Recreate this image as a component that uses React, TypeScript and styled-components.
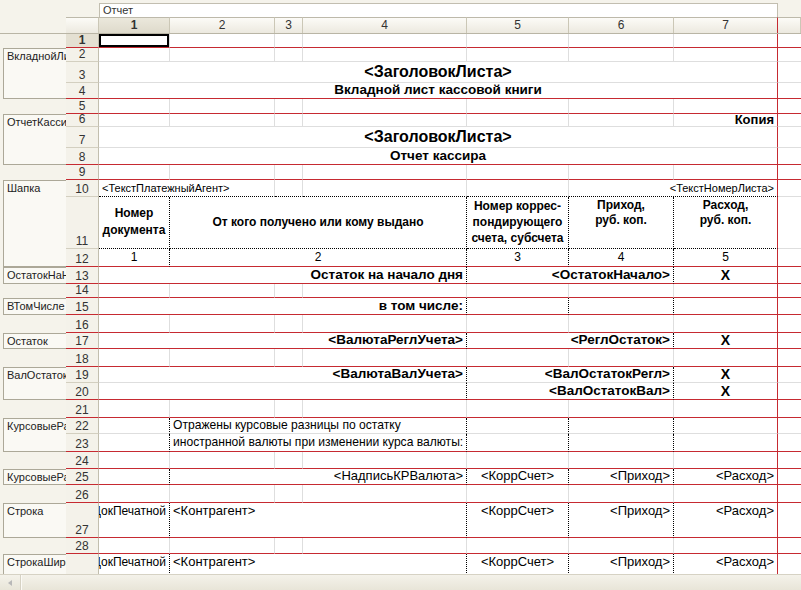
import React from "react";
import styled, { createGlobalStyle, css } from "styled-components";

const RED = "#c62a31";
const GRID = "#dedede";
const TAN = "#cbc7b6";
const BEIGE = "#f5f3eb";
const COLS = [71, 105, 28, 164, 102, 105, 104];
const ROW_COLS = `33px ${COLS.map((w) => w + "px").join(" ")} 1fr`;

type Align = "left" | "center" | "right";

type CellDef = {
  c: number;
  s?: number;
  t?: string;
  al?: Align;
  top?: boolean;
  b?: boolean;
  fs?: number;
  lh?: number;
};

type RowDef = {
  n: number;
  h: number;
  red?: boolean;
  db?: boolean;
  dv?: number[];
  cells?: CellDef[];
};

type Area = { name: string; from: number; to: number };

const GlobalStyle = createGlobalStyle`
  html, body {
    margin: 0;
    padding: 0;
    background: ${BEIGE};
  }
  body {
    font-family: "Liberation Sans", Arial, sans-serif;
    color: #000;
    overflow: hidden;
  }
`;

// шрифты макета: заголовки, жирные итоги, обычные поля
const big = (t: string): CellDef => ({ c: 1, s: 7, t, al: "center", b: true, fs: 16 });
const sub = (t: string): CellDef => ({ c: 1, s: 7, t, al: "center", b: true, fs: 13.5 });
const bold = (c: number, s: number, t: string): CellDef => ({ c, s, t, al: "right", b: true, fs: 13.5 });
const X: CellDef = { c: 7, t: "X", al: "center", b: true, fs: 14 };

const lineCells = (top: boolean): CellDef[] => [
  { c: 1, t: "ДокПечатной", al: "right", top, fs: 12 },
  { c: 2, s: 3, t: "<Контрагент>", al: "left", top, fs: 13 },
  { c: 5, t: "<КоррСчет>", al: "center", top, fs: 13 },
  { c: 6, t: "<Приход>", al: "right", top, fs: 13 },
  { c: 7, t: "<Расход>", al: "right", top, fs: 13 },
];

const ROWS: RowDef[] = [
  { n: 1, h: 14, red: true },
  { n: 2, h: 14 },
  { n: 3, h: 21, cells: [big("<ЗаголовокЛиста>")] },
  { n: 4, h: 16, red: true, cells: [sub("Вкладной лист кассовой книги")] },
  { n: 5, h: 15, red: true },
  { n: 6, h: 13, cells: [{ c: 7, t: "Копия", al: "right", b: true, fs: 13 }] },
  { n: 7, h: 21, cells: [big("<ЗаголовокЛиста>")] },
  { n: 8, h: 17, red: true, cells: [sub("Отчет кассира")] },
  { n: 9, h: 15, red: true },
  {
    n: 10,
    h: 17,
    db: true,
    cells: [
      { c: 1, s: 2, t: "<ТекстПлатежныйАгент>", al: "left", fs: 11 },
      { c: 6, s: 2, t: "<ТекстНомерЛиста>", al: "right", fs: 11 },
    ],
  },
  {
    n: 11,
    h: 52,
    db: true,
    dv: [1, 4, 5, 6],
    cells: [
      { c: 1, t: "Номер\nдокумента", al: "center", b: true, fs: 12, lh: 17 },
      { c: 2, s: 3, t: "От кого получено или кому выдано", al: "center", b: true, fs: 12 },
      { c: 5, t: "Номер коррес-\nпондирующего\nсчета, субсчета", al: "center", b: true, fs: 12, lh: 16 },
      { c: 6, t: "Приход,\nруб. коп.", al: "center", top: true, b: true, fs: 12, lh: 15 },
      { c: 7, t: "Расход,\nруб. коп.", al: "center", top: true, b: true, fs: 12, lh: 15 },
    ],
  },
  {
    n: 12,
    h: 18,
    red: true,
    dv: [1, 4, 5, 6],
    cells: [
      { c: 1, t: "1", al: "center", fs: 12 },
      { c: 2, s: 3, t: "2", al: "center", fs: 12 },
      { c: 5, t: "3", al: "center", fs: 12 },
      { c: 6, t: "4", al: "center", fs: 12 },
      { c: 7, t: "5", al: "center", fs: 12 },
    ],
  },
  {
    n: 13,
    h: 17,
    red: true,
    dv: [4, 6],
    cells: [bold(1, 4, "Остаток на начало дня"), bold(5, 2, "<ОстатокНачало>"), X],
  },
  { n: 14, h: 14, red: true },
  { n: 15, h: 17, red: true, dv: [4, 5, 6], cells: [bold(1, 4, "в том числе:")] },
  { n: 16, h: 18, red: true },
  {
    n: 17,
    h: 16,
    red: true,
    dv: [4, 6],
    cells: [bold(1, 4, "<ВалютаРеглУчета>"), bold(5, 2, "<РеглОстаток>"), X],
  },
  { n: 18, h: 18, red: true },
  {
    n: 19,
    h: 16,
    dv: [4, 6],
    cells: [bold(1, 4, "<ВалютаВалУчета>"), bold(5, 2, "<ВалОстатокРегл>"), X],
  },
  {
    n: 20,
    h: 17,
    red: true,
    dv: [4, 6],
    cells: [{ c: 1, s: 4 }, bold(5, 2, "<ВалОстатокВал>"), X],
  },
  { n: 21, h: 18, red: true },
  {
    n: 22,
    h: 16,
    dv: [1, 4, 5, 6],
    cells: [{ c: 2, s: 3, t: "Отражены курсовые разницы по остатку", al: "left", fs: 12.1 }],
  },
  {
    n: 23,
    h: 18,
    red: true,
    dv: [1, 4, 5, 6],
    cells: [{ c: 2, s: 3, t: "иностранной валюты при изменении курса валюты:", al: "left", fs: 12.1 }],
  },
  { n: 24, h: 17, red: true },
  {
    n: 25,
    h: 16,
    red: true,
    dv: [1, 4, 5, 6],
    cells: [
      { c: 2, s: 3, t: "<НадписьКРВалюта>", al: "right", fs: 13 },
      { c: 5, t: "<КоррСчет>", al: "center", fs: 13 },
      { c: 6, t: "<Приход>", al: "right", fs: 13 },
      { c: 7, t: "<Расход>", al: "right", fs: 13 },
    ],
  },
  { n: 26, h: 18, red: true },
  { n: 27, h: 35, red: true, dv: [1, 4, 5, 6], cells: lineCells(true) },
  { n: 28, h: 16, red: true },
  { n: 29, h: 35, dv: [1, 4, 5, 6], cells: lineCells(true) },
];

const AREAS: Area[] = [
  { name: "ВкладнойЛист", from: 2, to: 4 },
  { name: "ОтчетКассира", from: 6, to: 8 },
  { name: "Шапка", from: 10, to: 12 },
  { name: "ОстатокНаНачало", from: 13, to: 13 },
  { name: "ВТомЧисле", from: 15, to: 15 },
  { name: "Остаток", from: 17, to: 17 },
  { name: "ВалОстаток", from: 19, to: 20 },
  { name: "КурсовыеРазницы", from: 22, to: 23 },
  { name: "КурсовыеРазницыИтог", from: 25, to: 25 },
  { name: "Строка", from: 27, to: 27 },
  { name: "СтрокаШирокая", from: 29, to: 29 },
];

const Page = styled.div`
  width: 801px;
  height: 590px;
  display: flex;
  flex-direction: column;
  background: ${BEIGE};
  overflow: hidden;
`;

const TopBar = styled.div`
  height: 17px;
  padding: 3px 0 0 99px;
  box-sizing: border-box;
  display: flex;
`;

const ReportTab = styled.div`
  width: 679px;
  background: #fff;
  border: 1px solid #c2beb0;
  border-bottom: none;
  box-sizing: border-box;
  font-size: 11px;
  line-height: 13px;
  color: #333;
  padding-left: 3px;
`;

const HeaderRow = styled.div`
  height: 16px;
  display: grid;
  grid-template-columns: 66px ${ROW_COLS};
  border-bottom: 1px solid #b9b5a5;
`;

const HeadBlank = styled.div`
  background: ${BEIGE};
`;

const ColHead = styled.div<{ $sel?: boolean; $edge?: string }>`
  border-top: 1px solid #bdb9aa;
  border-right: 1px solid ${(p) => p.$edge || TAN};
  background: ${(p) =>
    p.$sel ? "linear-gradient(#ebe8dc, #dedacb)" : "linear-gradient(#fcfbf7, #ece9df)"};
  font-size: 12px;
  font-weight: ${(p) => (p.$sel ? "bold" : "normal")};
  line-height: 14px;
  color: #333;
  text-align: center;
`;

const Body = styled.div`
  height: 541px;
  display: flex;
  overflow: hidden;
`;

const Groups = styled.div<{ $rows: string }>`
  width: 66px;
  flex: none;
  display: grid;
  grid-template-rows: ${(p) => p.$rows};
  align-content: start;
  overflow: hidden;
`;

const AreaBox = styled.div<{ $from: number; $to: number }>`
  grid-row: ${(p) => `${p.$from} / ${p.$to + 1}`};
  margin-left: 3px;
  border: 1px solid #aca898;
  border-right: none;
  background: #faf9f4;
  padding: 1px 0 0 3px;
  overflow: hidden;
  min-height: 0;
  min-width: 0;
`;

const AreaName = styled.div`
  font-size: 11px;
  line-height: 13px;
  color: #222;
  white-space: nowrap;
  overflow: hidden;
  text-overflow: clip;
`;

const Sheet = styled.div`
  flex: 1;
  display: flex;
  flex-direction: column;
`;

const SheetRow = styled.div<{ $h: number }>`
  flex: none;
  height: ${(p) => p.$h}px;
  display: grid;
  grid-template-columns: ${ROW_COLS};
  background: #fff;
`;

const RowHead = styled.div<{ $bottom: string; $sel?: boolean }>`
  display: flex;
  align-items: flex-end;
  justify-content: center;
  background: ${(p) => (p.$sel ? "#e4e0d2" : "#f4f2ea")};
  border-right: 1px solid #c2beae;
  border-bottom: 1px solid ${(p) => p.$bottom};
  font-size: 12px;
  font-weight: ${(p) => (p.$sel ? "bold" : "normal")};
  line-height: 14px;
  color: #333;
  overflow: hidden;
`;

const Cell = styled.div<{ $span: number; $right: string; $bottom: string; $al: Align; $top?: boolean; $sel?: boolean }>`
  grid-column: span ${(p) => p.$span};
  min-width: 0;
  display: flex;
  justify-content: ${(p) => (p.$al === "left" ? "flex-start" : p.$al === "right" ? "flex-end" : "center")};
  align-items: ${(p) => (p.$top ? "flex-start" : "center")};
  padding: ${(p) => (p.$top ? "1px 3px 0" : "0 3px")};
  border-right: ${(p) => p.$right};
  border-bottom: ${(p) => p.$bottom};
  overflow: hidden;
  ${(p) =>
    p.$sel &&
    css`
      box-shadow: inset 0 0 0 2px #000;
    `}
`;

const CellText = styled.span<{ $fs: number; $b?: boolean; $al: Align; $lh?: number }>`
  flex: none;
  font-size: ${(p) => p.$fs}px;
  font-weight: ${(p) => (p.$b ? "bold" : "normal")};
  line-height: ${(p) => (p.$lh ? p.$lh + "px" : "14px")};
  text-align: ${(p) => p.$al};
  white-space: pre;
  color: #000;
`;

const BottomBar = styled.div`
  height: 16px;
  display: flex;
  align-items: stretch;
  background: linear-gradient(#f4f2ea, #e8e5d8);
  border-top: 1px solid #d6d2c4;
  box-sizing: border-box;
`;

const ScrollLeft = styled.div`
  width: 20px;
  display: flex;
  align-items: center;
  justify-content: center;
  border-right: 1px solid #d6d2c4;
  &::before {
    content: "";
    border-style: solid;
    border-width: 3px 4px 3px 0;
    border-color: transparent #b8b8b8 transparent transparent;
  }
`;

const ScrollTrack = styled.div`
  flex: 1;
  box-shadow: inset 1px 0 0 #fbfaf6;
`;

function buildCells(row: RowDef) {
  const defs = row.cells || [];
  const out: React.ReactNode[] = [];
  let col = 1;
  while (col <= 8) {
    const def = defs.find((d) => d.c === col) || { c: col };
    const span = def.s || 1;
    const end = col + span - 1;
    let right = `1px solid ${GRID}`;
    if (end === 7) right = `1px solid ${RED}`;
    else if (end === 8) right = "none";
    else if (row.dv && row.dv.includes(end)) right = "1px dotted #000";
    let bottom = `1px solid ${GRID}`;
    if (row.red) bottom = `1px solid ${RED}`;
    else if (row.db && col <= 7) bottom = "1px dotted #000";
    const al = def.al || "left";
    out.push(
      <Cell
        key={col}
        $span={span}
        $right={right}
        $bottom={bottom}
        $al={al}
        $top={def.top}
        $sel={row.n === 1 && col === 1}
      >
        {def.t && (
          <CellText $fs={def.fs || 12} $b={def.b} $al={al} $lh={def.lh}>
            {def.t}
          </CellText>
        )}
      </Cell>
    );
    col = end + 1;
  }
  return out;
}

const App: React.FC = () => {
  const rowTemplate = ROWS.map((r) => r.h + "px").join(" ");

  return (
    <Page>
      <GlobalStyle />
      <TopBar>
        <ReportTab>Отчет</ReportTab>
      </TopBar>

      <HeaderRow>
        <HeadBlank />
        <ColHead />
        {COLS.map((_, i) => (
          <ColHead key={i} $sel={i === 0} $edge={i === 6 ? RED : undefined}>
            {i + 1}
          </ColHead>
        ))}
        <ColHead />
      </HeaderRow>

      <Body>
        <Groups $rows={rowTemplate}>
          {AREAS.map((a, i) => (
            <AreaBox key={i} $from={a.from} $to={a.to}>
              <AreaName>{a.name}</AreaName>
            </AreaBox>
          ))}
        </Groups>

        <Sheet>
          {ROWS.map((row) => (
            <SheetRow key={row.n} $h={row.h}>
              <RowHead $bottom={row.red ? RED : "#d3cfc0"} $sel={row.n === 1}>
                {row.n === 29 ? "" : row.n}
              </RowHead>
              {buildCells(row)}
            </SheetRow>
          ))}
        </Sheet>
      </Body>

      <BottomBar>
        <ScrollLeft />
        <ScrollTrack />
      </BottomBar>
    </Page>
  );
};

export default App;
